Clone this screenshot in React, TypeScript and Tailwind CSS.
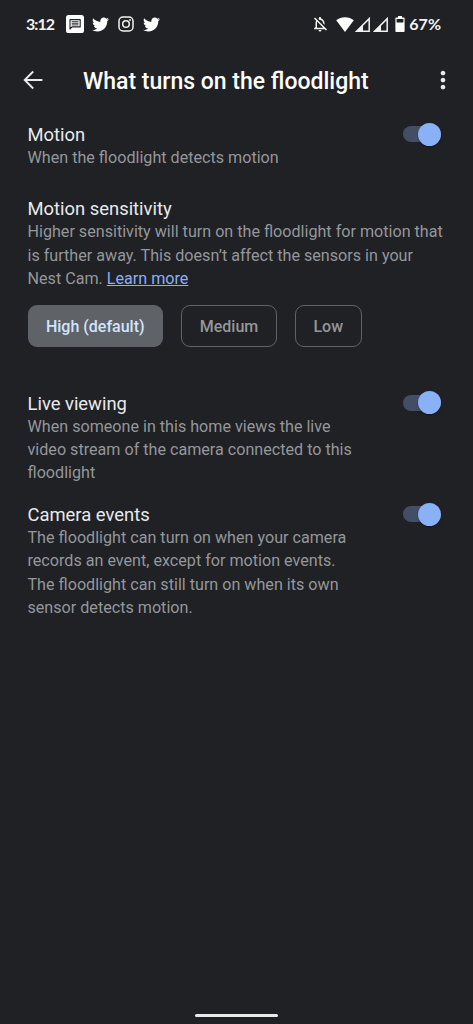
import type { ReactNode } from 'react';
import { FaTwitter } from 'react-icons/fa';
import { MdMoreVert, MdOutlineNotificationsOff } from 'react-icons/md';

function MessageIcon() {
  return (
    <svg className="h-[18px] w-[18px]" viewBox="0 0 18 18" fill="none">
      <rect width="18" height="18" rx="2.6" fill="#fff" />
      <path d="M4 14V4.6h10.2v7.3H6z" stroke="#202124" strokeWidth="1.1" strokeLinejoin="round" />
      <path d="M5.7 6.7h6.8M5.7 8.3h6.8M5.7 9.9h6.8" stroke="#202124" strokeWidth="0.9" />
    </svg>
  );
}

function InstagramIcon() {
  return (
    <svg className="h-4 w-4" viewBox="0 0 16 16" fill="none" stroke="#f1f1f1" strokeWidth="1.5">
      <rect x="1" y="1" width="14" height="14" rx="4" />
      <circle cx="8" cy="8" r="3.3" />
      <circle cx="12" cy="4" r="0.9" fill="#f1f1f1" stroke="none" />
    </svg>
  );
}

function WifiIcon() {
  return (
    <svg className="h-[15px] w-[18px]" viewBox="0 0 18 15">
      <path d="M9 15 0.2 3.2C2.7 1.2 5.7 0.2 9 0.2s6.3 1 8.8 3z" fill="#fff" />
    </svg>
  );
}

function SignalIcon() {
  return (
    <svg className="h-[15px] w-[15px]" viewBox="0 0 15 15">
      <path d="M1.6 14.2 14.2 1.6v12.6z" fill="none" stroke="#f1f1f1" strokeWidth="1.5" />
      <path d="M0.5 14.9 8 7.4v7.5z" fill="#f1f1f1" />
    </svg>
  );
}

function BatteryIcon() {
  return (
    <svg className="h-4 w-[10px]" viewBox="0 0 10 16">
      <path
        fillRule="evenodd"
        d="M3 0h4v1.6h1.6c.6 0 1 .4 1 1V15c0 .6-.4 1-1 1H1.4c-.6 0-1-.4-1-1V2.6c0-.6.4-1 1-1H3zM1.6 3v3.4h6.8V3z"
        fill="#fff"
      />
    </svg>
  );
}

function BackIcon() {
  return (
    <svg className="h-5 w-5" viewBox="0 0 20 20" fill="none" stroke="#e8eaed" strokeWidth="1.9">
      <path d="M19.4 10H2M10.2 1.5 1.7 10l8.500 8.500" />
    </svg>
  );
}

function Toggle() {
  return (
    <button role="switch" aria-checked="true" className="flex h-6 w-[39px] shrink-0 items-center">
      <span className="flex h-4 w-[38px] items-center justify-end rounded-full bg-[#434e66]">
        <span className="h-[23px] w-[23px] shrink-0 rounded-full bg-[#8ab0f5] shadow-[0_1px_2px_rgba(0,0,0,0.35)]" />
      </span>
    </button>
  );
}

function Setting({ title, className, children }: { title: string; className: string; children: ReactNode }) {
  return (
    <section className={`flex justify-between pr-[31px] pl-[27.5px] ${className}`}>
      <div>
        <h2 className="pt-px text-[18.4px] leading-[23px] text-[#e8eaed]">{title}</h2>
        <p className="text-[16.14px] leading-[23.3px] whitespace-nowrap text-[#94979b]">{children}</p>
      </div>
      <Toggle />
    </section>
  );
}

export default function App() {
  return (
    <div className="flex h-screen w-full flex-col overflow-hidden bg-[#202124] font-['Roboto','Liberation_Sans',sans-serif]">
      <div className="flex h-12 shrink-0 items-center pr-8 pl-[26px] font-['Lato','Liberation_Sans',sans-serif] text-base font-bold text-[#f1f1f1]">
        <span className="w-10 pb-px tracking-[-1px]">3:12</span>
        <MessageIcon />
        <FaTwitter className="ml-2 h-[17px] w-[17px] text-white" />
        <span className="ml-[9px]">
          <InstagramIcon />
        </span>
        <FaTwitter className="ml-[9px] h-[17px] w-[17px] text-white" />
        <div className="ml-auto flex items-center">
          <MdOutlineNotificationsOff className="mr-[7px] h-[18px] w-[18px]" />
          <WifiIcon />
          <span className="ml-px">
            <SignalIcon />
          </span>
          <span className="ml-[3px]">
            <SignalIcon />
          </span>
          <span className="ml-[7px]">
            <BatteryIcon />
          </span>
          <span className="ml-1 pb-px">67%</span>
        </div>
      </div>

      <header className="flex h-16 shrink-0 items-center pl-[22.5px]">
        <BackIcon />
        <h1 className="ml-[40.500px] pt-[3px] text-[23px] leading-7 font-medium whitespace-nowrap text-white">
          What turns on the floodlight
        </h1>
        <MdMoreVert className="mr-4 ml-auto h-7 w-7 text-[#e8eaed]" />
      </header>

      <Setting title="Motion" className="pt-2.5">
        When the floodlight detects motion
      </Setting>

      <section className="px-[27.5px] pt-[27px]">
        <h2 className="pt-px text-[18.4px] leading-[23px] text-[#e8eaed]">Motion sensitivity</h2>
        <p className="text-[16.14px] leading-[23.3px] whitespace-nowrap text-[#94979b]">
          Higher sensitivity will turn on the floodlight for motion that
          <br />
          is further away. This doesn’t affect the sensors in your
          <br />
          Nest Cam.{' '}
          <a href="#" className="text-[#8ab0f5] underline">
            Learn more
          </a>
        </p>
        <div className="mt-[14.5px] flex gap-[18px] text-base font-medium">
          <button className="h-[42px] w-[135.5px] rounded-[9px] bg-[#5f6368] pt-[3px] text-[#d2e3fc]">
            High (default)
          </button>
          <button className="h-[42px] w-24 rounded-[9px] border border-[#5f6368] pt-[3px] text-[#94979b]">Medium</button>
          <button className="h-[42px] w-[66.5px] rounded-[9px] border border-[#5f6368] pt-[3px] text-[#94979b]">
            Low
          </button>
        </div>
      </section>

      <Setting title="Live viewing" className="pt-11">
        When someone in this home views the live
        <br />
        video stream of the camera connected to this
        <br />
        floodlight
      </Setting>

      <Setting title="Camera events" className="pt-[17.5px]">
        The floodlight can turn on when your camera
        <br />
        records an event, except for motion events.
        <br />
        The floodlight can still turn on when its own
        <br />
        sensor detects motion.
      </Setting>

      <div className="mx-auto mt-auto mb-[7px] h-[3px] w-[83px] shrink-0 rounded-full bg-[#ebebeb]" />
    </div>
  );
}
